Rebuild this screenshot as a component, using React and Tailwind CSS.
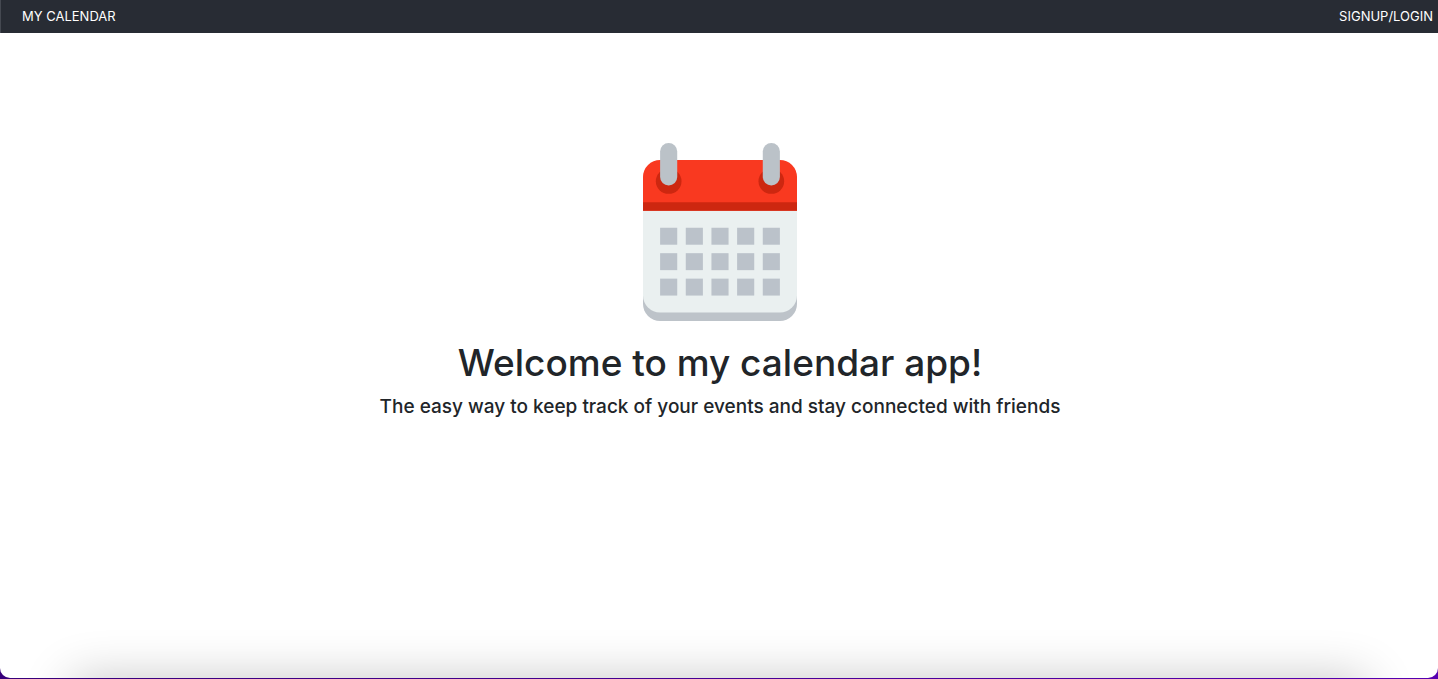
const columns = [2, 5, 8, 11, 14];
const rows = [10, 13, 16];

function CalendarIcon() {
  return (
    <svg
      className="h-[178px] w-[154px]"
      viewBox="0 0 18 21"
      preserveAspectRatio="none"
      role="img"
      aria-label="Calendar"
    >
      <path d="M0 9H18V19A2 2 0 0 1 16 21H2A2 2 0 0 1 0 19Z" fill="#bdc3c9" />
      <path d="M0 8H18V18A2 2 0 0 1 16 20H2A2 2 0 0 1 0 18Z" fill="#eaf0f0" />
      <path d="M2 2H16A2 2 0 0 1 18 4V8H0V4A2 2 0 0 1 2 2Z" fill="#f93920" />
      <path d="M0 7H18V8H0Z" fill="#cd2710" />
      <circle cx="3" cy="4.5" r="1.5" fill="#cd2710" />
      <circle cx="15" cy="4.5" r="1.5" fill="#cd2710" />
      <rect x="2" y="0" width="2" height="5" rx="1" fill="#bbc2c8" />
      <rect x="14" y="0" width="2" height="5" rx="1" fill="#bbc2c8" />
      {rows.map((y) =>
        columns.map((x) => (
          <rect key={`${x}-${y}`} x={x} y={y} width="2" height="2" fill="#bbc2ca" />
        ))
      )}
    </svg>
  );
}

export default function App() {
  return (
    <div className="min-h-screen bg-linear-to-r from-[#38007a] to-[#5600b0] pb-px font-['Inter',sans-serif] text-[#212529]">
      <div className="flex min-h-[calc(100vh-1px)] flex-col overflow-hidden rounded-b-[10px] bg-white">
        <nav className="flex h-[33px] shrink-0 items-center justify-between border-l border-[#454951] bg-[#282c34] pr-[5px] pl-[21px] text-[13px] text-white">
          <a href="#home">MY CALENDAR</a>
          <a href="#login">SIGNUP/LOGIN</a>
        </nav>
        <main className="flex grow flex-col items-center pt-[110px] pl-[2px] text-center">
          <CalendarIcon />
          <h1 className="mt-[18px] text-[37px] leading-[48px] font-medium">
            Welcome to my calendar app!
          </h1>
          <h2 className="mt-2 text-[19px] leading-6 font-medium">
            The easy way to keep track of your events and stay connected with friends
          </h2>
        </main>
        <div className="mx-[112px] h-0 shadow-[0_42px_50px_40px_rgba(0,0,0,0.24)]" />
      </div>
    </div>
  );
}
